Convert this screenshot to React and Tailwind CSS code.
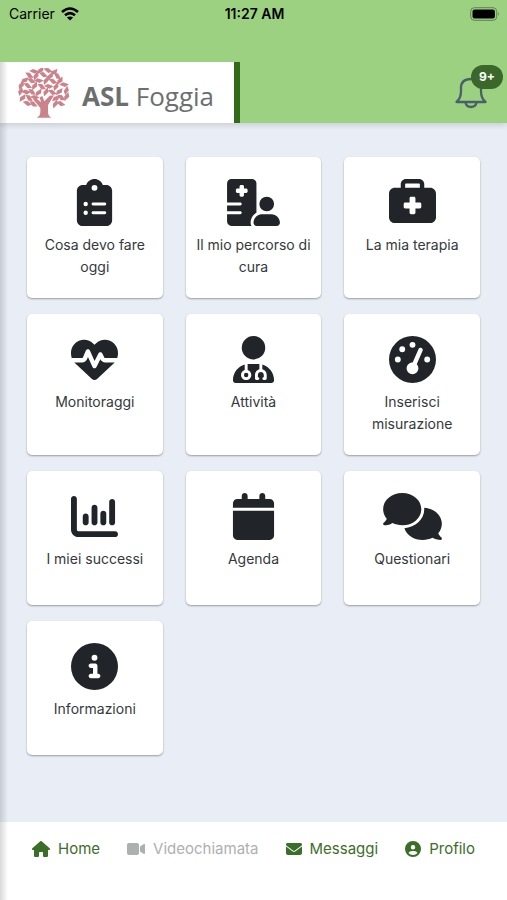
import React from "react";
import {
  FaClipboardList,
  FaHospitalUser,
  FaBriefcaseMedical,
  FaHeartPulse,
  FaUserDoctor,
  FaGaugeHigh,
  FaChartColumn,
  FaCalendar,
  FaComments,
  FaCircleInfo,
  FaHouse,
  FaVideo,
  FaEnvelope,
  FaCircleUser,
} from "react-icons/fa6";

const cards = [
  { label: "Cosa devo fare oggi", icon: FaClipboardList },
  { label: "Il mio percorso di cura", icon: FaHospitalUser, size: "w-[53px]" },
  { label: "La mia terapia", icon: FaBriefcaseMedical },
  { label: "Monitoraggi", icon: FaHeartPulse },
  { label: "Attività", icon: FaUserDoctor },
  { label: "Inserisci misurazione", icon: FaGaugeHigh },
  { label: "I miei successi", icon: FaChartColumn },
  { label: "Agenda", icon: FaCalendar },
  { label: "Questionari", icon: FaComments, size: "w-[59px]" },
  { label: "Informazioni", icon: FaCircleInfo },
];

const navItems = [
  { label: "Home", icon: FaHouse, size: "w-[18px]" },
  { label: "Videochiamata", icon: FaVideo, size: "w-[18px]", disabled: true },
  { label: "Messaggi", icon: FaEnvelope, size: "w-4" },
  { label: "Profilo", icon: FaCircleUser, size: "w-4" },
];

// x, y, rotation of every leaf in the crown
const leaves = [
  [48, 10, 20], [68, 7, -35], [90, 7, 35], [108, 13, -25],
  [34, 22, 50], [54, 24, -50], [76, 20, 40], [97, 25, -45], [118, 24, 60],
  [20, 37, -20], [40, 38, 40], [62, 38, 15], [84, 38, -50], [105, 40, 40], [126, 38, -40],
  [10, 52, -45], [29, 53, 45], [50, 54, -45], [71, 56, 50], [92, 55, 20], [114, 56, -50], [138, 50, 15],
  [8, 70, -60], [24, 72, 20], [42, 72, 55], [62, 74, -35], [84, 72, -50], [103, 73, 40], [124, 71, -30], [145, 68, -60],
  [14, 90, -35], [33, 90, 60], [50, 88, 20], [114, 91, -20], [130, 89, 50], [146, 86, -50],
  [28, 106, 35], [46, 108, 50], [112, 108, -50], [128, 107, 35],
];

function TreeLogo() {
  return (
    <svg viewBox="0 0 156 150" className="h-[50px] w-[52px] shrink-0" fill="#cb828b" aria-hidden="true">
      {leaves.map(([x, y, r]) => (
        <path
          key={`${x}-${y}`}
          d="M-14 4L-5 -6L14 -5L5 6Z"
          transform={`translate(${x} ${y}) rotate(${r})`}
        />
      ))}
      <path d="M56 149Q67 144 67 132V120L45 94L54 91L69 103L65 88L73 84L79 100L95 83L108 82L90 111V132Q90 144 100 149Z" />
    </svg>
  );
}

function StatusBar() {
  return (
    <div className="grid grid-cols-3 items-center pt-1 pr-[7px] pl-[9px] text-sm leading-5 text-black">
      <div className="flex items-center gap-1.5">
        <span>Carrier</span>
        <svg viewBox="0 0 18 14" className="h-[14px] w-[18px]" fill="none" stroke="currentColor" strokeWidth="2.6" aria-hidden="true">
          <path d="M1 5Q9 -2 17 5" />
          <path d="M4 8.300Q9 4 14 8.300" />
          <path d="M9 13.600L5.900 10.600Q9 8.200 12.100 10.600Z" fill="currentColor" stroke="none" />
        </svg>
      </div>
      <span className="text-center font-semibold">11:27 AM</span>
      <svg viewBox="0 0 30 14" className="h-[14px] w-[30px] justify-self-end" aria-hidden="true">
        <rect x="0.700" y="0.700" width="26" height="12.600" rx="3.600" fill="none" stroke="#5f8050" />
        <rect x="2.500" y="2.500" width="22.400" height="9" rx="2" />
        <path d="M28 5Q29.800 7 28 9Z" fill="#5f8050" />
      </svg>
    </div>
  );
}

function App() {
  return (
    <div className="relative flex min-h-screen flex-col bg-[#e9edf5] font-['Inter',sans-serif]">
      <header className="bg-[#9dd182] shadow-[0_2px_6px_rgba(0,0,0,0.15)]">
        <StatusBar />
        <div className="mt-[38px] flex h-[61px] items-center justify-between">
          <a href="#" className="flex h-full items-center gap-3 border-r-[6px] border-[#316a1a] bg-white pr-5 pl-[18px]">
            <TreeLogo />
            <span className="pt-1.5 font-['Open_Sans',sans-serif] text-[26px] leading-8 text-[#6b706f]">
              <span className="font-bold">ASL</span> <span className="font-normal">Foggia</span>
            </span>
          </a>
          <button type="button" aria-label="Notifiche" className="relative mr-5 text-[#4a6068]">
            <svg viewBox="0 0 32 32" className="h-8 w-8" fill="none" stroke="currentColor" strokeWidth="2.3" strokeLinejoin="round" aria-hidden="true">
              <path d="M1.500 25C4.500 22.500 6 20 6 14V11C6 5 10 2 16 2S26 5 26 11V14C26 20 27.500 22.500 30.500 25Z" />
              <path d="M10.500 25.500C11.500 31.500 20.500 31.500 21.500 25.500" />
            </svg>
            <span className="absolute -top-3 left-4 flex h-6 w-8 items-center justify-center rounded-full bg-[#3b682a] text-xs font-bold text-white">
              9+
            </span>
          </button>
        </div>
      </header>

      <main className="flex-1 px-[27px] pt-[34px] pb-8">
        <div className="grid grid-cols-3 gap-x-[23px] gap-y-4">
          {cards.map(({ label, icon: Icon, size = "w-[47px]" }) => (
            <button
              key={label}
              type="button"
              className="flex min-h-[134px] flex-col items-center gap-2 rounded-[5px] bg-white px-2 pt-[22px] pb-5 text-sm leading-[22px] text-[#35393c] shadow-[0_1px_2px_rgba(0,0,0,0.35)]"
            >
              <Icon className={`h-[47px] shrink-0 text-[#212529] ${size}`} />
              <span>{label}</span>
            </button>
          ))}
        </div>
      </main>

      <nav className="flex h-[78px] items-start justify-between bg-white px-8 pt-4 text-[15px] leading-[22px] text-[#3b6e28]">
        {navItems.map(({ label, icon: Icon, size, disabled }) => (
          <button
            key={label}
            type="button"
            disabled={disabled}
            className="flex items-center gap-2 disabled:text-[#aeb0af]"
          >
            <Icon className={`h-4 shrink-0 ${size}`} />
            <span>{label}</span>
          </button>
        ))}
      </nav>

      {/* edge shadow of the closed side menu */}
      <div className="pointer-events-none absolute bottom-0 left-0 top-[62px] w-2 bg-gradient-to-r from-black/15 to-transparent" />
    </div>
  );
}

export default App;
